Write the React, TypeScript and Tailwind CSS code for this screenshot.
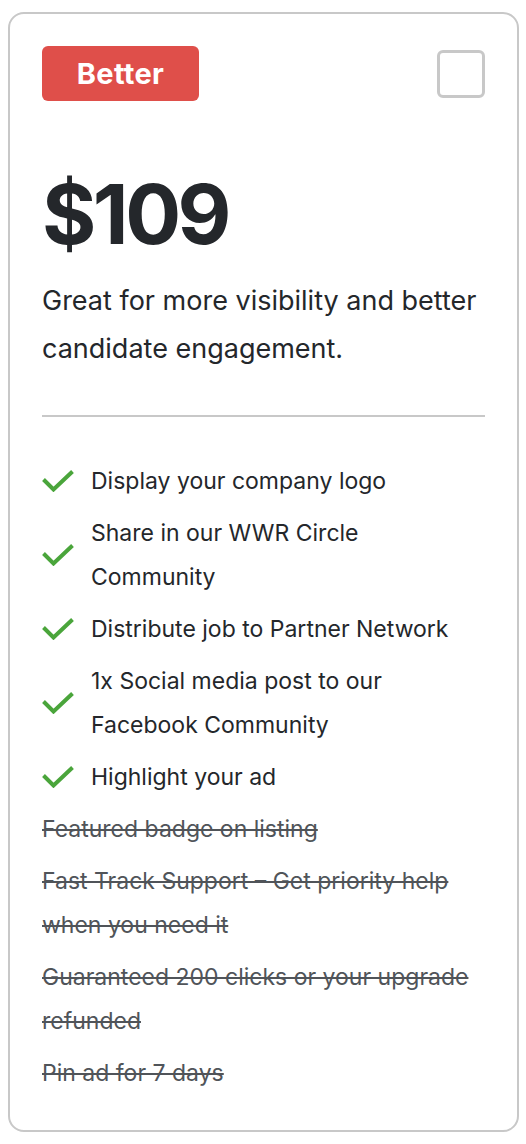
import React from "react";

const included = [
  ["Display your company logo"],
  ["Share in our WWR Circle", "Community"],
  ["Distribute job to Partner Network"],
  ["1x Social media post to our", "Facebook Community"],
  ["Highlight your ad"],
];

const excluded = [
  ["Featured badge on listing"],
  ["Fast Track Support – Get priority help", "when you need it"],
  ["Guaranteed 200 clicks or your upgrade", "refunded"],
  ["Pin ad for 7 days"],
];

function Check() {
  return (
    <svg width="32" height="22" viewBox="0 0 32 22" className="shrink-0">
      <path d="M1.5 9.5 L11.5 19.5 L30.5 1.5" fill="none" stroke="#4aa53b" strokeWidth="4" />
    </svg>
  );
}

export default function App() {
  return (
    <div className="bg-white min-h-[1144px] pl-2 pr-2 pt-3" style={{ fontFamily: "Inter, 'Noto Sans', sans-serif" }}>
      <div className="w-[511px] border-2 border-[#c8c8c8] rounded-2xl pl-8 pr-[32px] pt-8 pb-[35px] text-[#24272b]">
        <div className="flex justify-between items-start">
          <div className="w-[157px] h-[55px] rounded-md bg-[#df4f4a] flex items-center justify-center text-white font-bold text-[29px] tracking-[0.3px]">
            Better
          </div>
          <div className="w-[48px] h-[48px] mt-1 rounded-md border-[3px] border-[#c8c8c8]" />
        </div>
        <div className="mt-[72px] text-[83px] leading-none font-bold tracking-[-3.5px]">$109</div>
        <p className="mt-[21px] text-[27px] leading-[48px]">
          Great for more visibility and better
          <br />
          candidate engagement.
        </p>
        <div className="mt-[42px] h-[2px] bg-[#c8c8c8]" />
        <ul className="mt-[42px] flex flex-col gap-2">
          {included.map((lines, i) => (
            <li key={i} className="flex items-center gap-[17px]">
              <Check />
              <div className="text-[23px] leading-[44px]">
                {lines.map((l, j) => (
                  <div key={j}>{l}</div>
                ))}
              </div>
            </li>
          ))}
          {excluded.map((lines, i) => (
            <li key={"x" + i} className="text-[23px] leading-[44px] text-[#505459]">
              {lines.map((l, j) => (
                <div key={j} className="line-through">{l}</div>
              ))}
            </li>
          ))}
        </ul>
      </div>
    </div>
  );
}
